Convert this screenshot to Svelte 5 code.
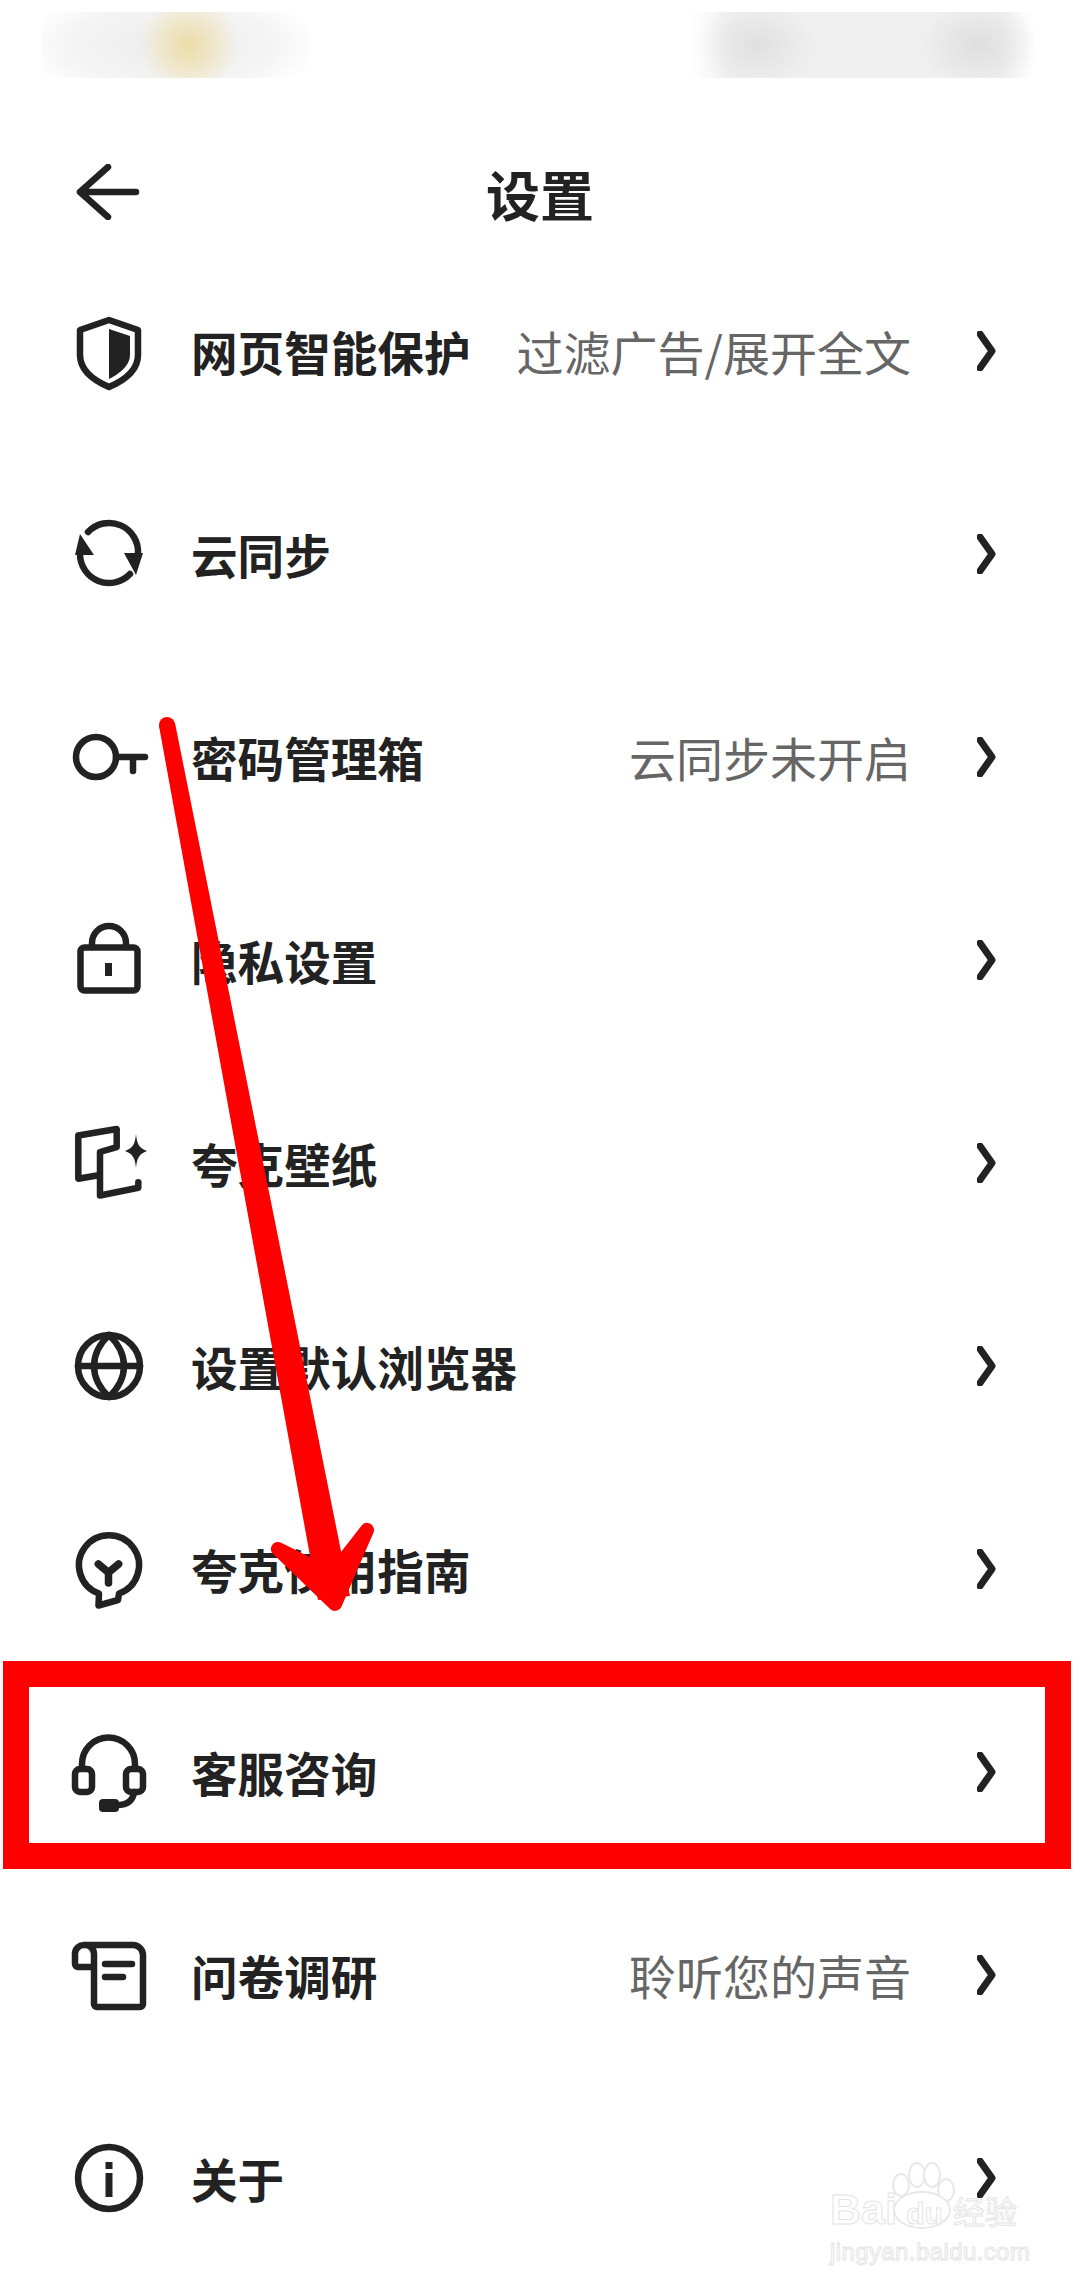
<script>
    const rows = [
        { icon: 'shield', label: '网页智能保护', sub: '过滤广告/展开全文' },
        { icon: 'sync', label: '云同步' },
        { icon: 'key', label: '密码管理箱', sub: '云同步未开启' },
        { icon: 'lock', label: '隐私设置' },
        { icon: 'wallpaper', label: '夸克壁纸' },
        { icon: 'globe', label: '设置默认浏览器' },
        { icon: 'bulb', label: '夸克使用指南' },
        { icon: 'headset', label: '客服咨询' },
        { icon: 'survey', label: '问卷调研', sub: '聆听您的声音' },
        { icon: 'info', label: '关于' }
    ];
</script>

<div class="page">
    <!-- blurred status bar -->
    <div class="status">
        <div class="smudge left"></div>
        <div class="smudge right"></div>
    </div>

    <header>
        <svg class="back" width="64" height="56" viewBox="0 0 64 56">
            <path d="M32 3 L4 28 L32 53 M4 28 H60" />
        </svg>
        <h1>设置</h1>
    </header>

    <ul>
        {#each rows as row}
            <li>
                <svg class="icon" width="72" height="72" viewBox="0 0 72 72">
                    {#if row.icon === 'shield'}
                        <path d="M36 5 L65 15 V40 C65 56 50 66 36 72 C22 66 7 56 7 40 V15 Z" />
                        <path class="solid" d="M36 14 L57 21 V40 C57 51 46 59 36 64 Z" />
                    {:else if row.icon === 'sync'}
                        <path d="M15 14 A29 29 0 0 1 65 36 M57 56 A29 29 0 0 1 7 36" />
                        <path class="solid" d="M7 16 L21 37 H2 Z M51 35 H70 L63 57 Z" />
                    {:else if row.icon === 'key'}
                        <circle cx="23" cy="36" r="20" />
                        <path d="M43 36 H72 M60 36 V50" stroke-linejoin="miter" />
                    {:else if row.icon === 'lock'}
                        <rect x="7.5" y="23.5" width="57" height="43" rx="4" />
                        <path d="M19 23 V19 A17 17 0 0 1 53 19 V23" />
                        <rect class="solid" x="32" y="39" width="7" height="13" />
                    {:else if row.icon === 'wallpaper'}
                        <path d="M24 48.5 L5.3 51.8 V8.5 L43.7 2 V20.2 L27 25 V68.5 L65.3 60.8 V55.2" />
                        <path class="solid" d="M63 7 C64 17 66 21 74 24 C66 27 64 31 63 41 C62 31 60 27 52 24 C60 21 62 17 63 7 Z" />
                    {:else if row.icon === 'globe'}
                        <circle cx="36" cy="36" r="31" />
                        <path d="M36 5 C16 24 16 48 36 67 C56 48 56 24 36 5 Z M5 36 H67" />
                    {:else if row.icon === 'bulb'}
                        <path d="M26 60.5 A30 30 0 1 1 46 60.5 L45 67 L25.5 72.5 Z" />
                        <path class="thick" d="M25.3 31 L35.5 39.5 L45.7 31 M35.5 39.5 V50" />
                    {:else if row.icon === 'headset'}
                        <path d="M9 32 V28 A26.5 26.5 0 0 1 62 28 V32" />
                        <rect x="2" y="33" width="17" height="23" rx="5" />
                        <rect x="53" y="33" width="17" height="23" rx="5" />
                        <path d="M61 56 C60 65 54 69 44 69" />
                        <rect class="solid" x="26" y="63" width="20" height="13" rx="4" />
                    {:else if row.icon === 'survey'}
                        <path d="M17 28 H5 A3 3 0 0 1 2 25 V14 A9 9 0 0 1 11 6 H60 A10 10 0 0 1 70 16 V65 A3 3 0 0 1 67 68 H24 A3 3 0 0 1 21 65 V15 A9 9 0 0 0 11 6" />
                        <path d="M32 25 H59 M32 38 H50" stroke-linejoin="miter" stroke-linecap="butt" />
                    {:else if row.icon === 'info'}
                        <circle cx="36" cy="36" r="31" />
                        <rect class="solid" x="32.5" y="20" width="7" height="7" />
                        <rect class="solid" x="32.5" y="31" width="7" height="24" />
                    {/if}
                </svg>
                <span class="label">{row.label}</span>
                {#if row.sub}
                    <span class="sub">{row.sub}</span>
                {/if}
                <svg class="chevron" width="20" height="40" viewBox="0 0 20 40">
                    <path d="M3 3 L15 20 L3 37" />
                </svg>
            </li>
        {/each}
    </ul>

    <!-- annotations on top of the screenshot -->
    <div class="frame"></div>
    <svg class="arrow" width="1080" height="2280" viewBox="0 0 1080 2280">
        <circle cx="167" cy="725" r="8" />
        <polygon points="159,726 175,723 350,1596 318,1600" />
        <polygon class="head" points="278,1549 335,1604 367,1530 342,1562 312,1566" />
    </svg>

    <div class="watermark">
        <svg class="paw" width="130" height="72" viewBox="0 0 130 72">
            <ellipse cx="71" cy="25" rx="8" ry="11" />
            <ellipse cx="87" cy="15" rx="8" ry="12" />
            <ellipse cx="102" cy="15" rx="8" ry="12" />
            <ellipse cx="116" cy="30" rx="8" ry="11" />
            <ellipse cx="92" cy="50" rx="28" ry="18" />
        </svg>
        <div class="mark"><span class="bai">Bai</span><span class="du">du</span><span class="jy">经验</span></div>
        <div class="site">jingyan.baidu.com</div>
    </div>
</div>

<style>
    :global(body) {
        margin: 0;
        background: #fff;
    }

    .page {
        position: relative;
        width: 1080px;
        height: 2280px;
        overflow: hidden;
        background: #fff;
        color: #222;
        font-family: "Noto Sans CJK SC", "Liberation Sans", sans-serif;
    }

    .status {
        display: flex;
        justify-content: space-between;
        height: 122px;
        padding: 12px 45px 0 41px;
        box-sizing: border-box;
    }

    .smudge {
        height: 66px;
    }

    .left {
        width: 269px;
        background:
            radial-gradient(ellipse 50px 50px at 148px 33px, #ecdca8 0%, rgba(240, 228, 190, 0.6) 60%, transparent 100%),
            radial-gradient(ellipse 150px 60px at 130px 33px, #ececec 0%, rgba(242, 242, 242, 0.8) 70%, transparent 100%);
    }

    .right {
        width: 345px;
        background:
            radial-gradient(ellipse 60px 45px at 68px 33px, #e0e0e0 0%, transparent 100%),
            radial-gradient(ellipse 60px 45px at 288px 33px, #dedede 0%, transparent 100%),
            linear-gradient(90deg, #fff 0%, #f0f0f0 12%, #f0f0f0 90%, #fff 100%);
    }

    header {
        display: flex;
        align-items: center;
        justify-content: center;
        position: relative;
        height: 127px;
        padding-top: 16px;
        box-sizing: border-box;
    }

    h1 {
        margin: 0;
        font-size: 54px;
        font-weight: 700;
        line-height: 1;
    }

    svg path,
    svg circle,
    svg rect {
        fill: none;
        stroke: #222;
        stroke-width: 6.5;
        stroke-linecap: round;
        stroke-linejoin: round;
    }

    svg .solid {
        fill: #222;
        stroke: none;
    }

    svg .thick {
        stroke-width: 7.5;
    }

    .back {
        position: absolute;
        left: 76px;
        top: 42px;
    }

    ul {
        list-style: none;
        margin: 0;
        padding: 0;
    }

    li {
        display: flex;
        align-items: center;
        height: 203px;
        padding: 0 83px 0 73px;
    }

    .icon {
        flex: none;
        overflow: visible;
    }

    .label {
        margin-left: 46px;
        font-size: 46.6px;
        font-weight: 700;
        white-space: nowrap;
    }

    .sub {
        margin-left: auto;
        font-size: 47px;
        color: #666;
        white-space: nowrap;
    }

    .chevron {
        flex: none;
        margin-left: auto;
    }

    .sub + .chevron {
        margin-left: 66px;
    }

    .chevron path {
        stroke-width: 7;
    }

    .frame {
        position: absolute;
        left: 3px;
        top: 1661px;
        width: 1068px;
        height: 208px;
        border: 26px solid #f00;
        box-sizing: border-box;
    }

    .arrow {
        position: absolute;
        left: 0;
        top: 0;
    }

    .arrow polygon,
    .arrow circle {
        fill: #f00;
        stroke: none;
    }

    .arrow .head {
        stroke: #f00;
        stroke-width: 14;
        stroke-linejoin: round;
    }

    .watermark {
        position: absolute;
        left: 830px;
        top: 2160px;
        width: 200px;
        font-family: "Liberation Sans", sans-serif;
        color: #fff;
        -webkit-text-stroke: 1px #e4e4e4;
    }

    .paw {
        position: absolute;
        left: 0;
        top: 0;
    }

    .paw ellipse {
        fill: #fff;
        stroke: #e8e8e8;
        stroke-width: 2;
    }

    .mark {
        position: relative;
        display: flex;
        align-items: baseline;
        margin-top: 27px;
        font-size: 43px;
        font-weight: 700;
        line-height: 44px;
        white-space: nowrap;
    }

    .bai {
        width: 66px;
    }

    .du {
        width: 57px;
        font-size: 30px;
        text-align: center;
    }

    .jy {
        font-family: "Noto Sans CJK SC", sans-serif;
        font-size: 32px;
        font-weight: 400;
    }

    .site {
        position: relative;
        margin-top: 1px;
        font-size: 24px;
        line-height: 30px;
        letter-spacing: 0.4px;
        white-space: nowrap;
    }
</style>
